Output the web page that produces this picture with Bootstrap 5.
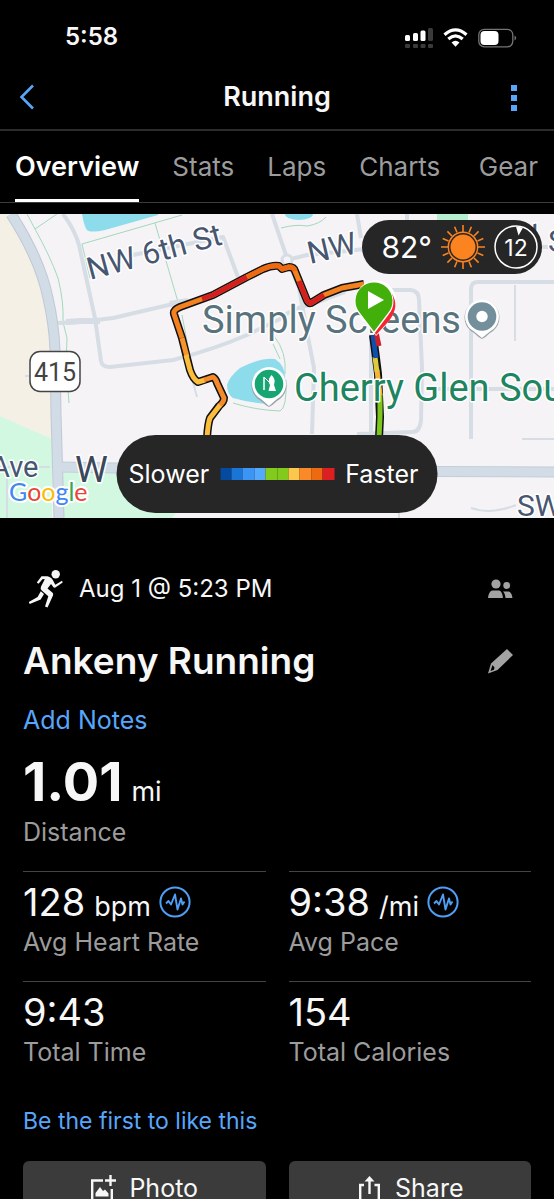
<!DOCTYPE html>
<html lang="en">
<head>
<meta charset="utf-8">
<meta name="viewport" content="width=device-width, initial-scale=1">
<title>Running</title>
<link href="https://cdn.jsdelivr.net/npm/bootstrap@5.3.0/dist/css/bootstrap.min.css" rel="stylesheet">
<style>
  body { background: #000; color: #f7f7f7; font-family: Inter, "Liberation Sans", sans-serif; font-size: 25px; line-height: 32px; }
  a { color: #58a6fb; text-decoration: none; }
  .app-shell { height: 100vh; }
  .scroller { overflow-y: auto; scrollbar-width: none; }
  .scroller::-webkit-scrollbar { display: none; }
  .status-bar { height: 64px; padding: 10px 36px 0 65px; font-size: 24px; font-weight: 600; }
  .title-bar { height: 67px; padding: 0 28px 0 16px; border-bottom: 2px solid #2c2c2c; }
  .title-bar h1 { font-size: 27px; font-weight: 600; line-height: 32px; }
  .bare { border: 0; background: none; padding: 0; line-height: 0; }
  .side { width: 24px; }
  .side-wide { width: 36px; }
  .tab-strip { height: 72px; padding: 0 16px 0 15px; gap: 33px; border-bottom: 1px solid #3c3c3c; margin-bottom: 11px; font-size: 26px; }
  .tab-strip a { color: #9c9c9c; border-bottom: 3px solid transparent; padding-top: 3px; }
  .tab-strip a.current { color: #fff; font-size: 27px; font-weight: 600; border-color: #fff; }
  .map-view { height: 304px; }
  .map-view > svg { width: 100%; height: 100%; display: block; }
  .pill { background: #262626; color: #fff; border-radius: 40px; }
  .weather { top: 6px; right: 12px; height: 54px; padding: 0 4px 0 19px; gap: 8px; font-size: 30px; }
  .legend-pill { bottom: 5px; left: 50%; transform: translateX(-50%); height: 78px; padding: 0 19px 0 12px; gap: 11px; white-space: nowrap; }
  .pace-scale { width: 114px; height: 12px; }
  .pace-scale span { flex: 1; }
  .details { padding: 47px 23px 24px; }
  .date-row { font-size: 24px; height: 48px; padding-left: 4px; padding-right: 18px; }
  .name-row { margin-top: 24px; height: 48px; padding-right: 18px; }
  .name-row h2 { font-size: 37px; font-weight: 600; line-height: 48px; }
  .notes { margin-top: 19px; }
  .big-value { margin-top: 16px; height: 60px; font-size: 54px; font-weight: 700; line-height: 60px; }
  .big-value small, .metric-value small { font-size: 27px; font-weight: 400; line-height: 1; margin-left: 9px; }
  .caption-line { color: #9c9c9c; line-height: 40px; }
  .metrics { margin-top: 19px; --bs-gutter-x: 23px; }
  .metric { border-top: 1px solid #444; padding: 10px 0 19px; }
  .metric-value { height: 40px; font-size: 38px; line-height: 40px; gap: 8px; }
  .likes { margin-top: 14px; font-size: 23px; }
  .actions { margin-top: 24px; --bs-gutter-x: 23px; }
  .actions .btn { background: #3b3b3b; color: #f7f7f7; height: 56px; font-size: 25px; border: 0; border-radius: 6px; gap: 13px; }
</style>
</head>
<body>
<div class="app-shell d-flex flex-column">
  <header class="flex-shrink-0">
    <div class="status-bar d-flex align-items-center justify-content-between">
      <span>5:58</span>
      <svg width="113" height="22" viewBox="0 0 113 22" fill="#fff" aria-hidden="true">
        <rect x="0" y="9" width="5" height="6" rx="1.5"/><rect x="8" y="7" width="5" height="8" rx="1.5"/><rect x="15.5" y="4.500" width="5" height="10.500" rx="1.5"/>
        <g fill="#3a3a3a"><rect x="23" y="2" width="5" height="13" rx="1.5"/><rect x="0" y="18" width="5" height="4" rx="1"/><rect x="8" y="18" width="5" height="4" rx="1"/><rect x="15.500" y="18" width="5" height="4" rx="1"/><rect x="23" y="18" width="5" height="4" rx="1"/></g>
        <g fill="none" stroke="#fff" stroke-width="3.200"><path d="M39.500 8.800Q50.500-1 61.500 8.800"/><path d="M43.300 13Q50.500 6.600 57.700 13"/></g>
        <path d="M46.500 16.500Q50.500 13 54.500 16.500L50.500 20.800Z"/>
        <rect x="73.800" y="3.300" width="34" height="17.500" rx="5.500" fill="none" stroke="#747474" stroke-width="1.300"/>
        <rect x="75.500" y="5" width="18" height="14" rx="4"/><path d="M109.500 9.500Q113 12 109.500 14.500Z" fill="#747474"/>
      </svg>
    </div>
    <div class="title-bar d-flex align-items-center justify-content-between">
      <button class="bare side-wide text-start" aria-label="Back"><svg width="20" height="28" viewBox="0 0 20 28" fill="none" stroke="#58a6fb" stroke-width="2.600"><path d="M17 2.500L5.500 14L17 25.500"/></svg></button>
      <h1 class="m-0">Running</h1>
      <button class="bare side" aria-label="More options"><svg width="24" height="28" viewBox="0 0 24 28" fill="#58a6fb"><path d="M9 2h6v6H9zM9 12h6v6H9zM9 22h6v6H9z"/></svg></button>
    </div>
    <nav class="tab-strip d-flex" aria-label="Activity sections">
      <a href="#overview" class="current d-flex align-items-center" aria-current="page">Overview</a>
      <a href="#stats" class="d-flex align-items-center">Stats</a>
      <a href="#laps" class="d-flex align-items-center">Laps</a>
      <a href="#charts" class="d-flex align-items-center">Charts</a>
      <a href="#gear" class="d-flex align-items-center ms-auto">Gear</a>
    </nav>
  </header>

  <main class="scroller flex-grow-1" id="overview">
    <div class="map-view position-relative overflow-hidden">
      <svg viewBox="0 0 554 304" preserveAspectRatio="xMidYMid slice" role="img" aria-label="Route map">
        <rect width="554" height="304" fill="#f5f3f5"/>
        <!-- land and water -->
        <path d="M0 0H8Q34 40 44 80Q52 110 52 136V226L0 202Z" fill="#f5f0e5"/>
        <path d="M0 202L52 225V304H0ZM60 258H180V294L172 304H60Z" fill="#d3f8e2"/>
        <path d="M82 0Q84 12 87 16Q90 19 105 16L158 1V0ZM227 171Q229 163 240 154Q262 143 275 145Q286 152 285 166L270 190Q250 189 233 184Q227 180 227 171Z" fill="#8ddcec"/>
        <ellipse cx="299" cy="0" rx="14" ry="6" fill="#8ddcec"/>
        <rect x="437" y="0" width="31" height="8" fill="#b5efcf"/>
        <!-- park paths -->
        <g fill="none" stroke="#a2d9bd" stroke-width="1">
          <path d="M27 0L35 15Q50 42 58 64Q64 88 63 108L67 124L66 150L69 189M35 15L57 0M90 64L82 30L182 1M155 9L178 88M182 101L194 165M233 189Q255 196 280 197Q287 194 286 166M281 14Q296 10 307 12Q320 10 326 3M274 122Q287 138 285 160M273 130L280 145"/>
        </g>
        <!-- streets -->
        <g fill="none" stroke="#d6dde4" stroke-linejoin="round">
          <path d="M11 0Q40 45 48 84Q54 110 55 136L56 200L59 304" stroke="#bfc9d3" stroke-width="11"/>
          <path d="M60 253L280 257L554 258" stroke="#c4ced8" stroke-width="11"/>
          <path d="M11 0Q40 45 48 84Q54 110 55 136L56 200L59 304" stroke="#d2dce6" stroke-width="9"/>
          <path d="M56 253L280 257L554 258" stroke="#d2dce6" stroke-width="9"/>
          <g stroke-width="4">
            <path d="M63 0Q75 16 79 31L95 104L101 147Q102 153 110 153L173 146Q215 135 247 121L280 105Q292 94 310 91L345 78"/>
            <path d="M58 109L80 108L113 104L173 90L190 87M133 41L223 23L238 63"/>
            <path d="M272 0L287 44L299 74L307 118L314 154L312 220M287 46L307 41L404 31L554 33"/>
            <path d="M357 0L361 24M407 0V15"/>
            <path d="M380 76H411Q419 77 419 86L422 154L421 206Q420 218 412 218L357 220M371 90V220"/>
            <path d="M554 68H478Q471 68 471 75V225M434 175H554"/>
          </g>
          <path d="M515 71V127M522 225H554M471 294Q490 301 516 291M399 290V304M0 253H50M25 162H30M197 183L193 168M7 262V304" stroke-width="2"/>
          <path d="M66 108L80 107H100M170 90L188 87" stroke-width="6"/>
        </g>
        <circle cx="287" cy="46" r="5" fill="#f5f3f5" stroke="#d6dde4" stroke-width="3"/>
        <!-- route -->
        <g fill="none" stroke-linejoin="round" stroke-linecap="butt">
          <path d="M364 70L342 74L324 81L311 89Q308 90 306 84L295 57Q294 53 289 53L282 55L279 52Q272 51 263 55L247 63L213 81L180 93Q173 96 174 100L182 124L190 156Q193 165 198 168L213 163Q216 165 217 169L224 184Q224 188 219 192L210 204Q208 209 207 224" stroke="#111" stroke-width="8"/>
          <path d="M364 70L342 74L324 81L311 89Q308 90 306 84L295 57Q294 53 289 53L282 55L279 52Q272 51 263 55L247 63L213 81L180 93Q173 96 174 100L182 124" stroke="#f4811f" stroke-width="5"/>
          <path d="M324 81L311 89Q308 90 306 84L299 67M247 63L213 81L202 85" stroke="#d3201f" stroke-width="5"/>
          <path d="M295 57Q294 53 289 53L282 55L279 52Q272 51 263 55L247 63" stroke="#ec6a12" stroke-width="5"/>
          <path d="M182 124L187 143" stroke="#f9942b" stroke-width="5"/>
          <path d="M186 141L190 156Q193 165 198 168L205 166" stroke="#fbbd3b" stroke-width="5"/>
          <path d="M204 166L213 163Q216 165 217 169L224 184Q224 188 219 192" stroke="#f58a2b" stroke-width="5"/>
          <path d="M220 191L210 204Q208 209 207 224" stroke="#fbbd3b" stroke-width="5"/>
          <path d="M373 121L376 144L378 160L380 203L379 224" stroke="#111" stroke-width="8"/>
          <path d="M380 180V203L379 224" stroke="#7cc71c" stroke-width="5"/>
          <path d="M377 156L380 181" stroke="#f6b437" stroke-width="5"/>
          <path d="M375 143L377 158" stroke="#ddc93b" stroke-width="5"/>
          <path d="M373 121L376 144" stroke="#0c50ae" stroke-width="5"/>
          <path d="M376 118L379 132" stroke="#c81f2d" stroke-width="5"/>
        </g>
        <!-- place names -->
        <g font-family="Roboto, Inter, sans-serif" stroke="#fff" stroke-width="3" stroke-linejoin="round" paint-order="stroke">
          <g fill="#475671" font-size="31">
            <text transform="translate(90 66) rotate(-15)">NW 6th St</text>
            <text transform="translate(310 50) rotate(-13)">NW</text>
            <text transform="translate(515 37) rotate(-13)">W</text>
            <text x="548" y="38">S</text>
            <text x="-9" y="263" font-size="29">Ave</text>
            <text x="517" y="302" font-size="30">SW</text>
            <text x="75" y="268" font-size="37" fill="#3b475a">W</text>
          </g>
          <text x="202" y="119" font-size="38" fill="#58737e">Simply Screens</text>
          <text x="294" y="187" font-size="38" fill="#1e8560">Cherry Glen South</text>
        </g>
        <rect x="30" y="137.500" width="50" height="40" rx="10" fill="#fff" stroke="#444" stroke-width="1.500"/>
        <text x="55" y="167" text-anchor="middle" font-family="Roboto, sans-serif" font-size="25" fill="#444">415</text>
        <text x="9" y="287" font-family="Lato, sans-serif" font-size="25" stroke="#fff" stroke-width="4" stroke-linejoin="round" paint-order="stroke"><tspan fill="#4285f4">G</tspan><tspan fill="#ea4335">o</tspan><tspan fill="#fbbc04">o</tspan><tspan fill="#4285f4">g</tspan><tspan fill="#34a853">l</tspan><tspan fill="#ea4335">e</tspan></text>
        <!-- pins -->
        <g>
          <path d="M482 125Q478 123 474 119A17.500 17.500 0 1 1 490 119Q486 123 482 125Z" fill="#9aa3aa"/>
          <path d="M482 124L474 117.500A17 17 0 1 1 490 117.500Z" fill="#fff"/>
          <circle cx="482" cy="102.500" r="14.300" fill="#738f9b"/><circle cx="482" cy="102.500" r="5.700" fill="#fff"/>
          <path d="M269 193Q265 191 261 187A17.500 17.500 0 1 1 277 187Q273 191 269 193Z" fill="#9aa3aa"/>
          <path d="M269 192L261 185A17 17 0 1 1 277 185Z" fill="#fff"/>
          <circle cx="269" cy="170" r="14.300" fill="#17a673"/>
          <g fill="#fff"><path d="M264 163V176" fill="none" stroke="#fff" stroke-width="1.500"/><path d="M264 163L269 168" stroke="#fff" stroke-width="1"/><path d="M271.500 161Q276 165 274 171L276 177H268.500L270 171Q267 166 271.500 161Z"/></g>
          <path d="M376 122L365 103A20 20 0 1 1 396 88Q394 105 376 122Z" fill="#fff"/>
          <path d="M376 121L366 102L392 80Q400 92 389 107Z" fill="#f52532"/>
          <path d="M374 120L359 100A19.500 19.500 0 1 1 389 100Z" fill="#fff"/>
          <path d="M374 117.500L360 99A18.500 18.500 0 1 1 388 99Z" fill="#43af0a"/>
          <path d="M368 77V95L384 86Z" fill="#fff"/>
        </g>
      </svg>

      <div class="pill weather position-absolute d-flex align-items-center">
        <span>82°</span>
        <svg width="46" height="46" viewBox="-23 -23 46 46" aria-label="Sunny" role="img">
          <circle r="12.500" fill="#fb8320"/><circle r="14.700" fill="none" stroke="#fb8320" stroke-width="1.500"/>
          <g stroke="#fb8320" stroke-width="1.600"><path d="M0-15V-22M0 15V22M15 0H22M-15 0H-22M11-11L15.600-15.600M11 11L15.600 15.600M-11-11L-15.600-15.600M-11 11L-15.600 15.600"/><path d="M6-14.500L8.400-20.300M-6-14.500L-8.400-20.300M6 14.500L8.400 20.300M-6 14.500L-8.400 20.300M14.500-6L20.300-8.400M14.500 6L20.300 8.400M-14.500-6L-20.300-8.400M-14.500 6L-20.300 8.400"/></g>
        </svg>
        <svg width="44" height="44" viewBox="-22 -22 44 44" aria-label="Wind 12" role="img">
          <circle r="21" fill="none" stroke="#fff" stroke-width="1.500"/><path d="M0-20.500L7-19.500L2.500-11.500Z" fill="#fff"/>
          <text y="9" text-anchor="middle" fill="#fff" font-size="23">12</text>
        </svg>
      </div>

      <div class="pill legend-pill position-absolute d-flex align-items-center">
        <span>Slower</span>
        <div class="pace-scale d-flex">
          <span style="background:#044b9f"></span><span style="background:#1a75d6"></span><span style="background:#3b95f5"></span><span style="background:#55a9fc"></span><span style="background:#82cb1c"></span><span style="background:#82cb1c"></span><span style="background:#fcc84c"></span><span style="background:#fa8a28"></span><span style="background:#ee6a10"></span><span style="background:#dc2021"></span>
        </div>
        <span>Faster</span>
      </div>
    </div>

    <section class="details">
      <div class="date-row d-flex align-items-center justify-content-between">
        <div class="d-flex align-items-center gap-3">
          <svg width="36" height="40" viewBox="0 0 36 40" fill="#f7f7f7" aria-hidden="true">
            <circle cx="28.700" cy="5.300" r="4.200"/>
            <path d="M14.500 7.300L20.500 7.200Q25 8.500 26 11.500L28.300 15.800L35 11.800L35.700 13.500L28 18.800L26.700 18.500L24 15L20.500 19.500L25.600 23.800Q26.500 25 26 26.500L20.500 38.500L18 37.500L21.300 27.300L15 21.800Q12.800 19.800 14 17.500L17.800 10.300L15.700 10L11.500 14.800L9.800 13.600Z"/>
            <path d="M13.800 22.300L17 25L13.700 30.500L2.700 35L1.800 33L10.600 28Z"/>
          </svg>
          <time>Aug 1 @ 5:23 PM</time>
        </div>
        <svg width="25" height="20" viewBox="0 0 25 20" fill="#a3a3a3" role="img" aria-label="Visible to connections">
          <circle cx="8" cy="5" r="4.600"/><circle cx="18.700" cy="6.500" r="3.400"/>
          <path d="M0 19Q1 11.500 4.500 11.500H11Q14 11.500 15 19ZM15 12.500H20.500Q23.500 12.500 24.500 19H17.500Q17 14 15 12.500Z"/>
        </svg>
      </div>
      <div class="name-row d-flex align-items-center justify-content-between">
        <h2 class="m-0">Ankeny Running</h2>
        <button class="bare" aria-label="Edit name"><svg width="25" height="26" viewBox="0 0 25 26" fill="#a3a3a3"><path fill-rule="evenodd" d="M19 1L25 7L9.500 22L0 25.500L3 15.500ZM4.500 17L2.500 23L6 21.800L6.500 19.500Z"/></svg></button>
      </div>
      <div class="notes"><a href="#notes">Add Notes</a></div>
      <div class="big-value">1.01<small>mi</small></div>
      <div class="caption-line">Distance</div>

      <div class="row metrics">
        <div class="col-6"><div class="metric">
          <div class="metric-value d-flex align-items-center"><span>128<small>bpm</small></span>
            <button class="bare" aria-label="Heart rate chart"><svg width="32" height="32" viewBox="0 0 32 32" fill="none" stroke="#4f9ff7"><circle cx="16" cy="16" r="14.600" stroke-width="2"/><path d="M7 17.500L9.500 15L12 18.500L16 8.500L18.500 23.500L22 12.500L23.500 18.500L25.500 15.500" stroke-width="1.900" stroke-linejoin="round"/></svg></button></div>
          <div class="caption-line">Avg Heart Rate</div>
        </div></div>
        <div class="col-6"><div class="metric">
          <div class="metric-value d-flex align-items-center"><span>9:38<small>/mi</small></span>
            <button class="bare" aria-label="Pace chart"><svg width="32" height="32" viewBox="0 0 32 32" fill="none" stroke="#4f9ff7"><circle cx="16" cy="16" r="14.600" stroke-width="2"/><path d="M7 17.500L9.500 15L12 18.500L16 8.500L18.500 23.500L22 12.500L23.500 18.500L25.500 15.500" stroke-width="1.900" stroke-linejoin="round"/></svg></button></div>
          <div class="caption-line">Avg Pace</div>
        </div></div>
        <div class="col-6"><div class="metric">
          <div class="metric-value">9:43</div>
          <div class="caption-line">Total Time</div>
        </div></div>
        <div class="col-6"><div class="metric">
          <div class="metric-value">154</div>
          <div class="caption-line">Total Calories</div>
        </div></div>
      </div>

      <div class="likes"><a href="#like">Be the first to like this</a></div>

      <div class="row actions">
        <div class="col-6"><button class="btn w-100 d-flex align-items-center justify-content-center">
          <svg width="26" height="28" viewBox="0 0 26 28" fill="none" stroke="#f7f7f7" stroke-width="2.400" aria-hidden="true"><path d="M13 5.500H2.200V25.800H21.800V14M20.500 0V11M15 5.500H26"/><path d="M5.500 21.500V18L10 12L13 16L15 14.500L18.500 18.500V21.500Z" fill="#f7f7f7" stroke="none"/></svg>
          Photo</button></div>
        <div class="col-6"><button class="btn w-100 d-flex align-items-center justify-content-center">
          <svg width="26" height="28" viewBox="0 0 26 28" fill="none" stroke="#f7f7f7" stroke-width="2.400" aria-hidden="true"><path d="M8 10H4.200V25.800H22.800V10H18.500M13.500 19V3"/><path d="M8.500 6.500L13.500 1L18.500 6.500Z" fill="#f7f7f7" stroke="none"/></svg>
          Share</button></div>
      </div>
    </section>
  </main>
</div>
<script src="https://cdn.jsdelivr.net/npm/bootstrap@5.3.0/dist/js/bootstrap.bundle.min.js"></script>
</body>
</html>
